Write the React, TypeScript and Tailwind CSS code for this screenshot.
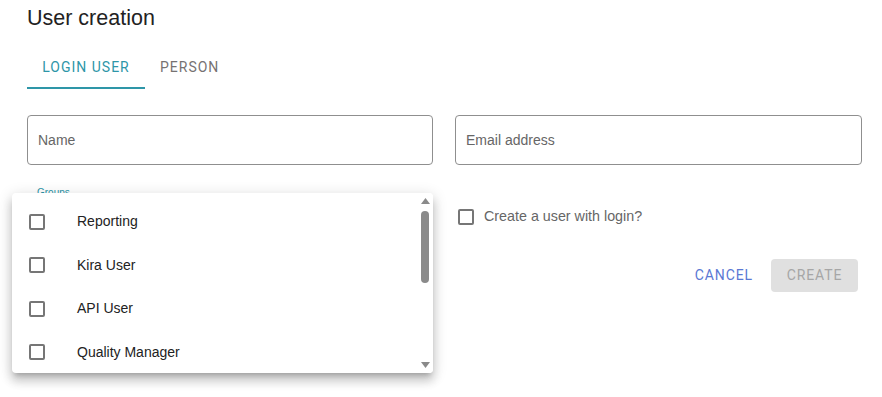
import React from 'react';

const groups = ['Reporting', 'Kira User', 'API User', 'Quality Manager'];

const Box: React.FC<{ className?: string }> = ({ className = '' }) => (
    <span className={`block w-[16px] h-[16px] border-2 border-[#767676] rounded-[2px] bg-white ${className}`} />
);

const OutlinedField: React.FC<{ label: string }> = ({ label }) => (
    <div className="h-[50px] border border-[#8f8f8f] rounded-[4px] flex items-center px-[10px] pt-[1px]">
        <span className="text-[14px] text-[#666]">{label}</span>
    </div>
);

const GroupsMenu: React.FC = () => (
    <div className="absolute left-[12px] top-[193px] w-[421px] h-[180px] bg-white rounded-[4px] overflow-hidden shadow-[0px_5px_5px_-3px_rgba(0,0,0,0.2),0px_8px_10px_1px_rgba(0,0,0,0.14),0px_3px_14px_2px_rgba(0,0,0,0.12)]">
        <ul className="pt-[7px] pr-[16px]">
            {groups.map(g => (
                <li key={g} className="h-[43.5px] flex items-center">
                    <span className="w-[65px] pl-[17px] flex">
                        <Box />
                    </span>
                    <span className="text-[14px] text-[#222]">{g}</span>
                </li>
            ))}
        </ul>
        {/* scrollbar */}
        <div className="absolute right-0 top-0 bottom-0 w-[16px] bg-white flex flex-col items-center">
            <svg className="mt-[5px]" width="9" height="6" viewBox="0 0 9 6">
                <path d="M4.5 0 L9 6 L0 6 Z" fill="#8a8a8a" />
            </svg>
            <div className="mt-[7px] w-[8px] h-[72px] rounded-full bg-[#8a8a8a]" />
            <div className="flex-1" />
            <svg className="mb-[5px]" width="9" height="6" viewBox="0 0 9 6">
                <path d="M0 0 L9 0 L4.5 6 Z" fill="#8a8a8a" />
            </svg>
        </div>
    </div>
);

const App: React.FC = () => {
    return (
        <div className="relative w-[882px] h-[397px] bg-white overflow-hidden font-['Liberation_Sans',Arial,sans-serif]">
            <div className="pl-[27px] pr-[20px]">
                <h1 className="pt-[5px] text-[21.5px] leading-[26px] text-[#222]">User creation</h1>

                <div className="mt-[12px] flex h-[47px] font-['Roboto',sans-serif] text-[14px] tracking-[1px]">
                    <div className="relative w-[118px] flex items-center justify-center pt-[1px] text-[#2e96a8]">
                        LOGIN USER
                        <span className="absolute left-0 right-0 bottom-[1px] h-[2px] bg-[#2e96a8]" />
                    </div>
                    <div className="px-[15px] flex items-center pt-[1px] text-[#767272]">PERSON</div>
                </div>

                <div className="mt-[25px] grid grid-cols-[406px_407px] gap-x-[22px]">
                    <div>
                        <OutlinedField label="Name" />
                        <div className="mt-[22px] pl-[10px] text-[10px] leading-[12px] text-[#2e96a8]">Groups</div>
                    </div>
                    <div>
                        <OutlinedField label="Email address" />
                        <label className="mt-[40px] h-[24px] flex items-center pl-[3px]">
                            <Box />
                            <span className="ml-[10px] text-[14.3px] text-[#666]">Create a user with login?</span>
                        </label>
                        <div className="mt-[30px] flex justify-end items-center pr-[4px] font-['Roboto',sans-serif] text-[14px] tracking-[0.9px]">
                            <button className="h-[33px] px-[8px] text-[#5a78d4]">CANCEL</button>
                            <button className="ml-[10px] h-[33px] w-[87px] rounded-[4px] bg-[#e0e0e0] text-[#a6a6a6]">CREATE</button>
                        </div>
                    </div>
                </div>
            </div>
            <GroupsMenu />
        </div>
    );
};

export default App;
